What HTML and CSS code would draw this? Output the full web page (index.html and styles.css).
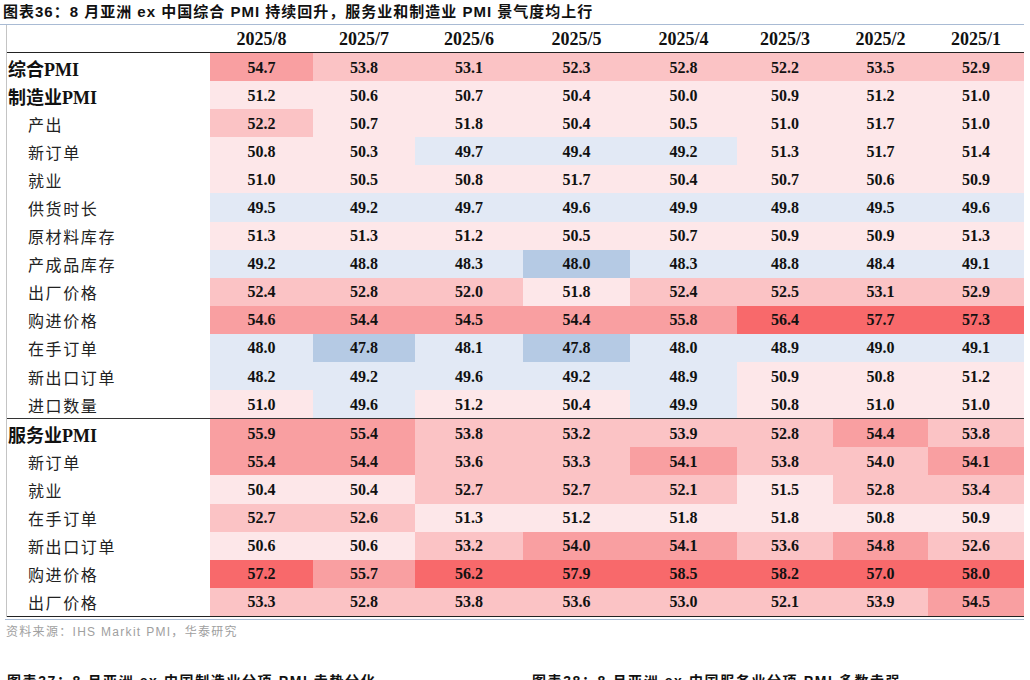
FILE: index.html
```html
<!DOCTYPE html>
<html lang="zh-CN">
<head>
<meta charset="utf-8">
<title>图表36</title>
<link rel="stylesheet" href="styles.css">
</head>
<body>
<div class="page">
  <div class="title">图表36：8 月亚洲 ex 中国综合 PMI 持续回升，服务业和制造业 PMI 景气度均上行</div>
  <div class="table">
    <div class="row head">
      <div class="lab"></div>
      <div class="c">2025/8</div><div class="c">2025/7</div><div class="c">2025/6</div><div class="c">2025/5</div>
      <div class="c">2025/4</div><div class="c">2025/3</div><div class="c">2025/2</div><div class="c">2025/1</div>
    </div>
    <div class="block">
      <div class="row"><div class="lab main">综合PMI</div>
        <div class="c p3">54.7</div><div class="c p2">53.8</div><div class="c p2">53.1</div><div class="c p2">52.3</div><div class="c p2">52.8</div><div class="c p2">52.2</div><div class="c p2">53.5</div><div class="c p2">52.9</div></div>
      <div class="row"><div class="lab main">制造业PMI</div>
        <div class="c p1">51.2</div><div class="c p1">50.6</div><div class="c p1">50.7</div><div class="c p1">50.4</div><div class="c p1">50.0</div><div class="c p1">50.9</div><div class="c p1">51.2</div><div class="c p1">51.0</div></div>
      <div class="row"><div class="lab sub">产出</div>
        <div class="c p2">52.2</div><div class="c p1">50.7</div><div class="c p1">51.8</div><div class="c p1">50.4</div><div class="c p1">50.5</div><div class="c p1">51.0</div><div class="c p1">51.7</div><div class="c p1">51.0</div></div>
      <div class="row"><div class="lab sub">新订单</div>
        <div class="c p1">50.8</div><div class="c p1">50.3</div><div class="c b1">49.7</div><div class="c b1">49.4</div><div class="c b1">49.2</div><div class="c p1">51.3</div><div class="c p1">51.7</div><div class="c p1">51.4</div></div>
      <div class="row"><div class="lab sub">就业</div>
        <div class="c p1">51.0</div><div class="c p1">50.5</div><div class="c p1">50.8</div><div class="c p1">51.7</div><div class="c p1">50.4</div><div class="c p1">50.7</div><div class="c p1">50.6</div><div class="c p1">50.9</div></div>
      <div class="row"><div class="lab sub">供货时长</div>
        <div class="c b1">49.5</div><div class="c b1">49.2</div><div class="c b1">49.7</div><div class="c b1">49.6</div><div class="c b1">49.9</div><div class="c b1">49.8</div><div class="c b1">49.5</div><div class="c b1">49.6</div></div>
      <div class="row"><div class="lab sub">原材料库存</div>
        <div class="c p1">51.3</div><div class="c p1">51.3</div><div class="c p1">51.2</div><div class="c p1">50.5</div><div class="c p1">50.7</div><div class="c p1">50.9</div><div class="c p1">50.9</div><div class="c p1">51.3</div></div>
      <div class="row"><div class="lab sub">产成品库存</div>
        <div class="c b1">49.2</div><div class="c b1">48.8</div><div class="c b1">48.3</div><div class="c b2">48.0</div><div class="c b1">48.3</div><div class="c b1">48.8</div><div class="c b1">48.4</div><div class="c b1">49.1</div></div>
      <div class="row"><div class="lab sub">出厂价格</div>
        <div class="c p2">52.4</div><div class="c p2">52.8</div><div class="c p2">52.0</div><div class="c p1">51.8</div><div class="c p2">52.4</div><div class="c p2">52.5</div><div class="c p2">53.1</div><div class="c p2">52.9</div></div>
      <div class="row"><div class="lab sub">购进价格</div>
        <div class="c p3">54.6</div><div class="c p3">54.4</div><div class="c p3">54.5</div><div class="c p3">54.4</div><div class="c p3">55.8</div><div class="c p4">56.4</div><div class="c p4">57.7</div><div class="c p4">57.3</div></div>
      <div class="row"><div class="lab sub">在手订单</div>
        <div class="c b1">48.0</div><div class="c b2">47.8</div><div class="c b1">48.1</div><div class="c b2">47.8</div><div class="c b1">48.0</div><div class="c b1">48.9</div><div class="c b1">49.0</div><div class="c b1">49.1</div></div>
      <div class="row"><div class="lab sub">新出口订单</div>
        <div class="c b1">48.2</div><div class="c b1">49.2</div><div class="c b1">49.6</div><div class="c b1">49.2</div><div class="c b1">48.9</div><div class="c p1">50.9</div><div class="c p1">50.8</div><div class="c p1">51.2</div></div>
      <div class="row"><div class="lab sub">进口数量</div>
        <div class="c p1">51.0</div><div class="c b1">49.6</div><div class="c p1">51.2</div><div class="c p1">50.4</div><div class="c b1">49.9</div><div class="c p1">50.8</div><div class="c p1">51.0</div><div class="c p1">51.0</div></div>
    </div>
    <div class="block last">
      <div class="row"><div class="lab main">服务业PMI</div>
        <div class="c p3">55.9</div><div class="c p3">55.4</div><div class="c p2">53.8</div><div class="c p2">53.2</div><div class="c p2">53.9</div><div class="c p2">52.8</div><div class="c p3">54.4</div><div class="c p2">53.8</div></div>
      <div class="row"><div class="lab sub">新订单</div>
        <div class="c p3">55.4</div><div class="c p3">54.4</div><div class="c p2">53.6</div><div class="c p2">53.3</div><div class="c p3">54.1</div><div class="c p2">53.8</div><div class="c p2">54.0</div><div class="c p3">54.1</div></div>
      <div class="row"><div class="lab sub">就业</div>
        <div class="c p1">50.4</div><div class="c p1">50.4</div><div class="c p2">52.7</div><div class="c p2">52.7</div><div class="c p2">52.1</div><div class="c p1">51.5</div><div class="c p2">52.8</div><div class="c p2">53.4</div></div>
      <div class="row"><div class="lab sub">在手订单</div>
        <div class="c p2">52.7</div><div class="c p2">52.6</div><div class="c p1">51.3</div><div class="c p1">51.2</div><div class="c p1">51.8</div><div class="c p1">51.8</div><div class="c p1">50.8</div><div class="c p1">50.9</div></div>
      <div class="row"><div class="lab sub">新出口订单</div>
        <div class="c p1">50.6</div><div class="c p1">50.6</div><div class="c p2">53.2</div><div class="c p3">54.0</div><div class="c p3">54.1</div><div class="c p2">53.6</div><div class="c p3">54.8</div><div class="c p2">52.6</div></div>
      <div class="row"><div class="lab sub">购进价格</div>
        <div class="c p4">57.2</div><div class="c p3">55.7</div><div class="c p4">56.2</div><div class="c p4">57.9</div><div class="c p4">58.5</div><div class="c p4">58.2</div><div class="c p4">57.0</div><div class="c p4">58.0</div></div>
      <div class="row"><div class="lab sub">出厂价格</div>
        <div class="c p2">53.3</div><div class="c p2">52.8</div><div class="c p2">53.8</div><div class="c p2">53.6</div><div class="c p2">53.0</div><div class="c p2">52.1</div><div class="c p2">53.9</div><div class="c p3">54.5</div></div>
    </div>
  </div>
  <div class="endline"></div>
  <div class="source">资料来源：IHS Markit PMI，华泰研究</div>
  <div class="next">
    <div class="next-title">图表37：8 月亚洲 ex 中国制造业分项 PMI 走势分化</div>
    <div class="next-title">图表38：8 月亚洲 ex 中国服务业分项 PMI 多数走强</div>
  </div>
</div>
</body>
</html>
```
FILE: styles.css
```css
* { box-sizing: border-box; }
html, body { margin: 0; padding: 0; background: #fff; }
body { width: 1030px; height: 680px; overflow: hidden; }
.page { width: 1030px; }
.title {
  height: 25px;
  padding: 2px 0 0 3px;
  border-bottom: 1px solid #a9bbd4;
  width: 1024px;
  font-family: "Liberation Sans", "Noto Sans CJK SC", sans-serif;
  font-weight: bold;
  font-size: 15px;
  line-height: 19px;
  letter-spacing: 1px;
  color: #111;
  white-space: nowrap;
}
.table {
  margin-left: 6px;
  width: 1018px;
  border-left: 1px solid #c4c4c4;
}
.row {
  display: grid;
  grid-template-columns: 203px 103px 102px 108px 107px 107px 96px 95px 96px;
  height: 28.1px;
  align-items: stretch;
}
.row.head {
  height: 28px;
  border-bottom: 1px solid #222;
}
.block { border-bottom: 1px solid #333; }
.block.last { border-bottom: 1px solid #222; }
.c {
  display: flex;
  align-items: center;
  justify-content: center;
  padding-top: 1px;
  font-family: "Liberation Serif", serif;
  font-weight: bold;
  font-size: 16px;
  color: #111;
}
.head .c { font-size: 18px; padding-top: 1px; }
.lab {
  display: flex;
  align-items: center;
  padding-top: 1px;
  font-family: "Liberation Serif", "Noto Sans CJK SC", serif;
  color: #111;
  white-space: nowrap;
}
.lab.main { font-weight: bold; font-size: 18px; padding-left: 1px; }
.lab.sub { font-size: 16px; letter-spacing: 1.6px; padding-left: 21px; color: #222; }
.p1 { background: #fde7e9; }
.p2 { background: #fbc3c5; }
.p3 { background: #f99fa1; }
.p4 { background: #f8696b; }
.b1 { background: #e2e9f5; }
.b2 { background: #b5cae4; }
.endline {
  margin: 2px 0 0 5px;
  width: 1019px;
  border-top: 1px solid #a9bbd4;
}
.source {
  margin: 4px 0 0 6px;
  font-family: "Liberation Sans", "Noto Sans CJK SC", sans-serif;
  font-size: 12px;
  line-height: 16px;
  letter-spacing: 1.3px;
  color: #a0a0a0;
}
.next {
  display: grid;
  grid-template-columns: 525px auto;
  margin-top: 31px;
  padding-left: 7px;
}
.next-title {
  font-family: "Liberation Sans", "Noto Sans CJK SC", sans-serif;
  font-weight: bold;
  font-size: 14px;
  line-height: 20px;
  letter-spacing: 1.6px;
  color: #111;
  white-space: nowrap;
}
```
